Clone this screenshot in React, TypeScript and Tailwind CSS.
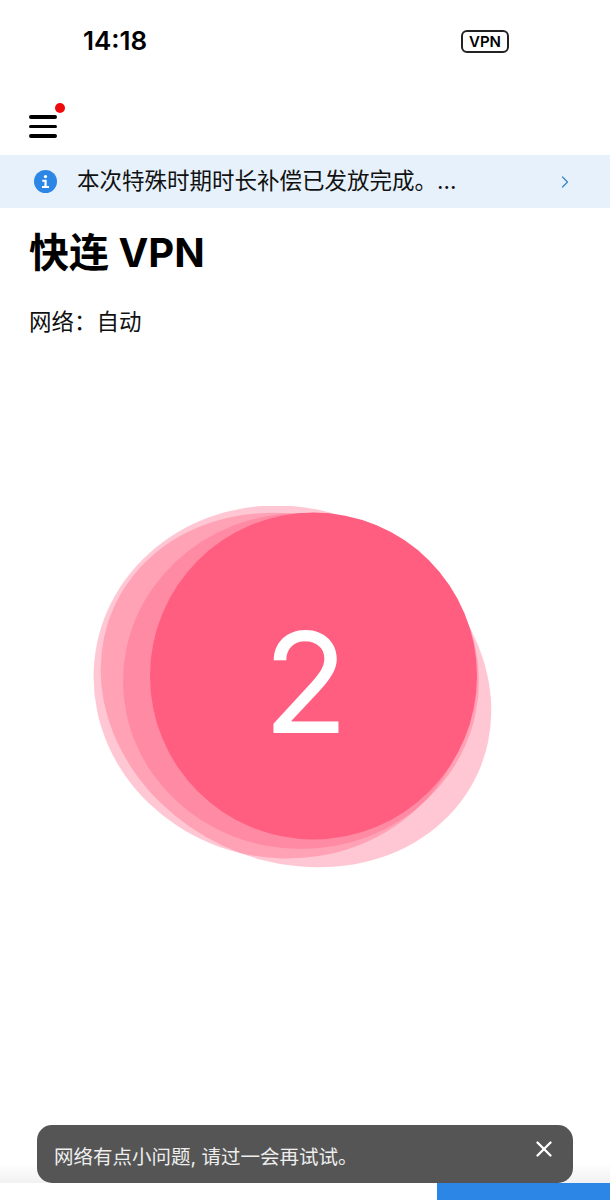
import React from "react";
import { ChevronRight, X } from "lucide-react";

const cjk = "font-['Inter','Noto_Sans_CJK_SC',sans-serif]";

const StatusBar: React.FC = () => (
  <div className="flex h-[82px] items-center justify-between pl-[83px] pr-[101px] text-black">
    <span className="text-[26px] font-semibold leading-none">14:18</span>
    <span className="flex h-[23px] w-[48px] items-center justify-center rounded-[6px] border-2 border-[#222] text-[15px] font-semibold leading-none">
      VPN
    </span>
  </div>
);

const MenuRow: React.FC = () => (
  <div className="flex h-[73px] items-center pl-[29px] pt-[16px]">
    <div className="relative flex w-[28px] flex-col gap-[6px]">
      <span className="h-[3.5px] rounded-full bg-black" />
      <span className="h-[3.5px] rounded-full bg-black" />
      <span className="h-[3.5px] rounded-full bg-black" />
      <span className="absolute -right-[8px] -top-[12px] h-[10px] w-[10px] rounded-full bg-[#ee0a0a]" />
    </div>
  </div>
);

const Notice: React.FC = () => (
  <div className="flex h-[53px] items-center bg-[#e6f1fb] pl-[34px] pr-[35px]">
    <svg viewBox="0 0 24 24" className="h-[23px] w-[23px] shrink-0">
      <circle cx="12" cy="12" r="12" fill="#2b86e6" />
      <circle cx="12" cy="6.8" r="1.7" fill="#fff" />
      <path d="M8.6 10.2h4.6v6.6h2.4v2H8.4v-2h2.5v-4.6H8.6z" fill="#fff" />
    </svg>
    <span className="ml-[20px] flex-1 text-[22.5px] leading-none text-[#111]">本次特殊时期时长补偿已发放完成。...</span>
    <ChevronRight className="h-[20px] w-[20px] text-[#3a86c8]" strokeWidth={1.5} />
  </div>
);

const Countdown: React.FC = () => (
  <div className="relative mt-[169px] h-[380px] w-full">
    <svg viewBox="0 0 610 380" className="h-[380px] w-[610px]">
      <ellipse cx="282" cy="176" rx="189" ry="176" fill="#ff5e80" fillOpacity="0.35" transform="rotate(12 282 176)" />
      <ellipse cx="296" cy="184" rx="200" ry="172" fill="#ff5e80" fillOpacity="0.35" transform="rotate(25 296 184)" />
      <ellipse cx="301" cy="175" rx="178" ry="168" fill="#ff5e80" fillOpacity="0.35" />
      <circle cx="313.5" cy="170" r="163.5" fill="#ff5e80" />
    </svg>
    <span className="absolute left-[263px] top-[104px] w-[84px] text-center text-[140px] font-normal leading-[144px] text-white">2</span>
  </div>
);

const Toast: React.FC = () => (
  <div className="absolute left-[37px] top-[1125px] flex h-[58px] w-[536px] items-center justify-between rounded-[15px] bg-[#555555] pl-[17px] pr-[16px] text-white">
    <span className="mt-[8px] text-[19.5px] leading-none text-[#eeeeee]">网络有点小问题, 请过一会再试试。</span>
    <X className="mb-[11px] h-[26px] w-[26px]" strokeWidth={2.2} />
  </div>
);

export default function App() {
  return (
    <div className={`relative flex h-[1200px] w-[610px] flex-col overflow-hidden bg-white ${cjk}`}>
      <StatusBar />
      <MenuRow />
      <Notice />
      <div className="flex-1 bg-gradient-to-b from-white from-[98%] to-[#f1f1f1]">
        <h1 className="mt-[21px] pl-[29px] text-[40px] font-bold leading-[48px] text-black">快连 VPN</h1>
        <p className="mt-[30px] pl-[29px] text-[22.5px] leading-[30px] text-[#111]">网络：自动</p>
        <Countdown />
      </div>
      <div className="flex h-[17px] justify-end bg-white">
        <div className="w-[173px] bg-[#2b86e6]" />
      </div>
      <Toast />
    </div>
  );
}
